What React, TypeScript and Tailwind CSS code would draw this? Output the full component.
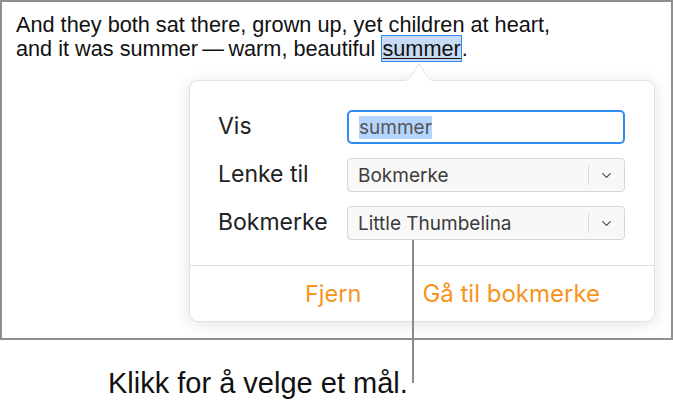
import { ChevronDown } from 'lucide-react';

function SelectBox({ value }: { value: string }) {
  return (
    <div className="flex h-[34px] items-center rounded-[4px] border border-[#d6d6d6] bg-[#f8f8f8]">
      <span className="flex-1 pl-[10px] text-[19px] leading-[23px] text-[#3c3c3c]">{value}</span>
      <span className="h-[20px] w-px bg-[#d8d8d8]" />
      <span className="flex w-[35px] justify-center text-[#555]">
        <ChevronDown size={15} strokeWidth={2} />
      </span>
    </div>
  );
}

export default function App() {
  return (
    <div
      className="relative h-[409px] w-[673px] overflow-hidden bg-white"
      style={{ fontFamily: '"Liberation Sans", Arial, sans-serif' }}
    >
      {/* Document frame */}
      <div className="h-[340px] w-[673px] border-2 border-[#8f8f8f] bg-white pl-[14px] pt-[11px]">
        <p className="text-[21.7px] leading-[24px] text-[#111]">
          And they both sat there, grown up, yet children at heart,
          <br />
          and it was summer{'\u2009'}—{'\u2009'}warm, beautiful{' '}
          <span className="border border-[#2f8cf5] bg-[#c7dbf3] underline decoration-1 underline-offset-2">summer</span>.
        </p>
      </div>

      {/* Popover */}
      <div
        className="absolute left-[189px] top-[80px] flex h-[242px] w-[466px] flex-col rounded-[9px] border border-[#e2e2e2] bg-white shadow-[0_2px_16px_rgba(0,0,0,0.12)]"
        style={{ fontFamily: 'Inter, "Liberation Sans", sans-serif' }}
      >
        <svg className="absolute left-[208px] top-[-19px]" width="42" height="20" viewBox="0 0 42 20">
          <path d="M0 19.5 C8 19.5 10 18 13 14 L21 1.5 L29 14 C32 18 34 19.5 42 19.5" fill="white" stroke="#e2e2e2" />
          <rect x="0" y="19" width="42" height="2" fill="white" />
        </svg>

        <div className="grid auto-rows-[34px] grid-cols-[129px_278px] gap-y-[14px] pl-[28px] pt-[29px]">
          <span className="flex items-center pb-[3px] text-[23px] leading-[28px] text-[#222]">Vis</span>
          <div className="flex h-[34px] items-center rounded-[5px] border-2 border-[#2f8cf5] bg-white pl-[10px]">
            <span className="bg-[#b4d5fd] text-[19px] leading-[23px] text-[#555]">summer</span>
          </div>

          <span className="flex items-center pb-[3px] text-[23px] leading-[28px] text-[#222]">Lenke til</span>
          <SelectBox value="Bokmerke" />

          <span className="flex items-center pb-[3px] text-[23px] leading-[28px] text-[#222]">Bokmerke</span>
          <SelectBox value="Little Thumbelina" />
        </div>

        <div className="mt-[25px] border-t border-[#e0e0e0]" />
        <div className="flex flex-1 items-center gap-[61px] pl-[115px] text-[24px] leading-[29px] text-[#f7941d]">
          <span className="text-[23.5px]">Fjern</span>
          <span>Gå til bokmerke</span>
        </div>
      </div>

      {/* Callout */}
      <div className="absolute left-[412px] top-[240px] h-[143px] w-[2px] bg-[#8a8a8a]" />
      <div className="absolute left-[108px] top-[367px] text-[29px] leading-[32px] text-[#111]">
        Klikk for å velge et mål.
      </div>
    </div>
  );
}
